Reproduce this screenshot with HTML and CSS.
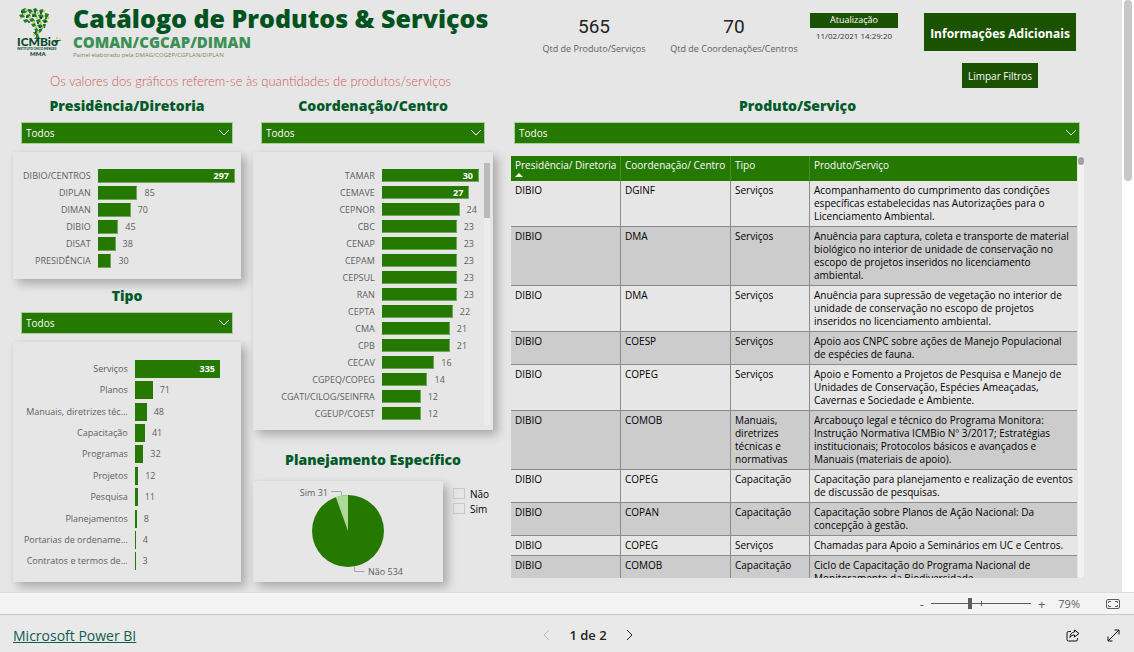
FILE: index.html
```html
<!DOCTYPE html>
<html lang="pt-BR">
<head>
<meta charset="utf-8">
<title>Catálogo de Produtos &amp; Serviços</title>
<link rel="stylesheet" href="styles.css">
</head>
<body>
<div class="viewport">
  <div class="report">
    <header class="header">
      <div class="intro">
        <div class="brand">
          <svg class="logo" viewBox="0 0 46 52" role="img" aria-label="ICMBio MMA">
            <g fill="#1f7a3a">
              <path d="M4 4l4-2 3 2-2 3-4 1zM11 5l3-2 2 3-3 2zM16 3l3-1 2 3-4 1zM22 4l4-1 1 3-4 1zM2 9l4-1 2 3-4 1zM9 9l4-1 1 3-4 1zM15 8l4-1 1 4-4 0zM21 9l4-1 2 3-4 2zM28 7l4 1-1 3-3 0zM6 14l4-1 2 2-4 2zM12 13l4-1 2 3-4 1zM19 14l4-1 1 3-4 1zM25 14l4-1 2 3-4 1zM14 18l4-1 1 3-3 1zM20 19l4-1 2 3-4 1zM26 18l3 0-1 4-3 0zM17 23l3-1 2 3-3 1zM22 23l4-1-2 4-2 1zM16 26l3 0 2 3-3 0zM19 29l2-2 1 4 2 2h-7l2-2z"/>
            </g>
            <g fill="#c3cf2b">
              <circle cx="9" cy="4" r="1.300"/><circle cx="15" cy="7" r="1.200"/><circle cx="21" cy="7" r="1.300"/><circle cx="27" cy="5" r="1.200"/><circle cx="7" cy="8" r="1.200"/><circle cx="4" cy="12" r="1"/><circle cx="13" cy="11" r="1.300"/><circle cx="20" cy="12" r="1.300"/><circle cx="27" cy="10" r="1.200"/><circle cx="31" cy="12" r="1.200"/><circle cx="17" cy="16" r="1.200"/><circle cx="24" cy="17" r="1.400"/><circle cx="19" cy="21" r="1.200"/><circle cx="26" cy="21" r="1"/><circle cx="21" cy="26" r="1.200"/><circle cx="17" cy="29" r="1"/><circle cx="40" cy="32" r="1"/><circle cx="43" cy="33" r=".8"/>
            </g>
            <g fill="#08492a">
              <circle cx="5" cy="6" r="1.100"/><circle cx="12" cy="4" r="1"/><circle cx="18" cy="6" r="1.100"/><circle cx="24" cy="7" r="1.100"/><circle cx="10" cy="11" r="1.100"/><circle cx="16" cy="10" r="1"/><circle cx="24" cy="12" r="1.200"/><circle cx="29" cy="12" r="1"/><circle cx="12" cy="16" r="1"/><circle cx="21" cy="17" r="1.100"/><circle cx="28" cy="16" r="1"/><circle cx="23" cy="21" r="1.100"/><circle cx="19" cy="26" r="1"/><path d="M37 36l3-2 5 0-3 1-3 2z"/>
            </g>
            <text class="logo-name" x="0" y="40">ICMBio</text>
            <text class="logo-sub" x="0" y="44">INSTITUTO CHICO MENDES</text>
            <text class="logo-mma" x="13" y="50">MMA</text>
          </svg>
          <div class="titles">
            <h1>Catálogo de Produtos &amp; Serviços</h1>
            <p class="unit">COMAN/CGCAP/DIMAN</p>
            <p class="author">Painel elaborado pela DMAG/COGEP/CGPLAN/DIPLAN</p>
          </div>
        </div>
        <p class="note">Os valores dos gráficos referem-se às quantidades de produtos/serviços</p>
      </div>
      <div class="kpi"><strong>565</strong><span>Qtd de Produto/Serviços</span></div>
      <div class="kpi kpi-wide"><strong>70</strong><span>Qtd de Coordenações/Centros</span></div>
      <div class="update"><span class="update-title">Atualização</span><time>11/02/2021 14:29:20</time></div>
      <div class="actions">
        <button class="btn btn-info" type="button">Informações Adicionais</button>
        <button class="btn btn-clear" type="button">Limpar Filtros</button>
      </div>
    </header>

    <main class="board">
      <section class="column">
        <h2><label for="f-dir">Presidência/Diretoria</label></h2>
        <div class="picker"><select id="f-dir"><option>Todos</option></select><svg viewBox="0 0 12 8"><path d="M1 1l5 5 5-5"/></svg></div>
        <div class="card chart chart-dir">
          <div class="row"><span class="name">DIBIO/CENTROS</span><div class="track"><div class="bar" style="width:100%"><b>297</b></div></div></div>
          <div class="row"><span class="name">DIPLAN</span><div class="track"><div class="bar" style="width:29%"></div><span>85</span></div></div>
          <div class="row"><span class="name">DIMAN</span><div class="track"><div class="bar" style="width:24%"></div><span>70</span></div></div>
          <div class="row"><span class="name">DIBIO</span><div class="track"><div class="bar" style="width:15%"></div><span>45</span></div></div>
          <div class="row"><span class="name">DISAT</span><div class="track"><div class="bar" style="width:13%"></div><span>38</span></div></div>
          <div class="row"><span class="name">PRESIDÊNCIA</span><div class="track"><div class="bar" style="width:10%"></div><span>30</span></div></div>
        </div>
        <h2 class="second"><label for="f-tipo">Tipo</label></h2>
        <div class="picker"><select id="f-tipo"><option>Todos</option></select><svg viewBox="0 0 12 8"><path d="M1 1l5 5 5-5"/></svg></div>
        <div class="card chart chart-tipo">
          <div class="row"><span class="name">Serviços</span><div class="track"><div class="bar" style="width:100%"><b>335</b></div></div></div>
          <div class="row"><span class="name">Planos</span><div class="track"><div class="bar" style="width:21%"></div><span>71</span></div></div>
          <div class="row"><span class="name">Manuais, diretrizes téc...</span><div class="track"><div class="bar" style="width:14%"></div><span>48</span></div></div>
          <div class="row"><span class="name">Capacitação</span><div class="track"><div class="bar" style="width:12%"></div><span>41</span></div></div>
          <div class="row"><span class="name">Programas</span><div class="track"><div class="bar" style="width:10%"></div><span>32</span></div></div>
          <div class="row"><span class="name">Projetos</span><div class="track"><div class="bar" style="width:4%"></div><span>12</span></div></div>
          <div class="row"><span class="name">Pesquisa</span><div class="track"><div class="bar" style="width:3.5%"></div><span>11</span></div></div>
          <div class="row"><span class="name">Planejamentos</span><div class="track"><div class="bar" style="width:2.4%"></div><span>8</span></div></div>
          <div class="row"><span class="name">Portarias de ordename...</span><div class="track"><div class="bar" style="width:1.2%"></div><span>4</span></div></div>
          <div class="row"><span class="name">Contratos e termos de...</span><div class="track"><div class="bar" style="width:1%"></div><span>3</span></div></div>
        </div>
      </section>

      <section class="column">
        <h2><label for="f-coord">Coordenação/Centro</label></h2>
        <div class="picker"><select id="f-coord"><option>Todos</option></select><svg viewBox="0 0 12 8"><path d="M1 1l5 5 5-5"/></svg></div>
        <div class="card chart chart-coord">
          <div class="rows">
            <div class="row"><span class="name">TAMAR</span><div class="track"><div class="bar" style="width:100%"><b>30</b></div></div></div>
            <div class="row"><span class="name">CEMAVE</span><div class="track"><div class="bar" style="width:90%"><b>27</b></div></div></div>
            <div class="row"><span class="name">CEPNOR</span><div class="track"><div class="bar" style="width:80%"></div><span>24</span></div></div>
            <div class="row"><span class="name">CBC</span><div class="track"><div class="bar" style="width:77%"></div><span>23</span></div></div>
            <div class="row"><span class="name">CENAP</span><div class="track"><div class="bar" style="width:77%"></div><span>23</span></div></div>
            <div class="row"><span class="name">CEPAM</span><div class="track"><div class="bar" style="width:77%"></div><span>23</span></div></div>
            <div class="row"><span class="name">CEPSUL</span><div class="track"><div class="bar" style="width:77%"></div><span>23</span></div></div>
            <div class="row"><span class="name">RAN</span><div class="track"><div class="bar" style="width:77%"></div><span>23</span></div></div>
            <div class="row"><span class="name">CEPTA</span><div class="track"><div class="bar" style="width:73%"></div><span>22</span></div></div>
            <div class="row"><span class="name">CMA</span><div class="track"><div class="bar" style="width:70%"></div><span>21</span></div></div>
            <div class="row"><span class="name">CPB</span><div class="track"><div class="bar" style="width:70%"></div><span>21</span></div></div>
            <div class="row"><span class="name">CECAV</span><div class="track"><div class="bar" style="width:54%"></div><span>16</span></div></div>
            <div class="row"><span class="name">CGPEQ/COPEG</span><div class="track"><div class="bar" style="width:47%"></div><span>14</span></div></div>
            <div class="row"><span class="name">CGATI/CILOG/SEINFRA</span><div class="track"><div class="bar" style="width:40%"></div><span>12</span></div></div>
            <div class="row"><span class="name">CGEUP/COEST</span><div class="track"><div class="bar" style="width:40%"></div><span>12</span></div></div>
          </div>
          <div class="rail"><div class="rail-thumb"></div></div>
        </div>
        <h2 class="plan">Planejamento Específico</h2>
        <div class="plan-row">
          <div class="card pie">
            <svg viewBox="0 0 190 101" role="img" aria-label="Sim 31, Não 534">
              <circle cx="95" cy="50" r="36" fill="#257800"/>
              <path d="M95 50V14A36 36 0 0 0 82.800 16.100Z" fill="#add89a"/>
              <path d="M78 10.500h10.500v4M101.500 86v4.500h10" fill="none" stroke="#a6a6a6"/>
              <text x="75" y="15" text-anchor="end">Sim 31</text>
              <text x="115" y="94">Não 534</text>
            </svg>
          </div>
          <div class="checks">
            <label><input type="checkbox">Não</label>
            <label><input type="checkbox">Sim</label>
          </div>
        </div>
      </section>

      <section class="column column-wide">
        <h2><label for="f-prod">Produto/Serviço</label></h2>
        <div class="picker"><select id="f-prod"><option>Todos</option></select><svg viewBox="0 0 12 8"><path d="M1 1l5 5 5-5"/></svg></div>
        <div class="table-box">
          <div class="table-clip">
            <table>
              <colgroup><col class="c1"><col class="c2"><col class="c3"><col></colgroup>
              <thead><tr><th aria-sort="ascending">Presidência/ Diretoria<svg class="sort" viewBox="0 0 8 4"><path d="M0 4l4-4 4 4z"/></svg></th><th>Coordenação/ Centro</th><th>Tipo</th><th>Produto/Serviço</th></tr></thead>
              <tbody>
                <tr><td>DIBIO</td><td>DGINF</td><td>Serviços</td><td>Acompanhamento do cumprimento das condições<br>específicas estabelecidas nas Autorizações para o<br>Licenciamento Ambiental.</td></tr>
                <tr><td>DIBIO</td><td>DMA</td><td>Serviços</td><td>Anuência para captura, coleta e transporte de material<br>biológico no interior de unidade de conservação no<br>escopo de projetos inseridos no licenciamento<br>ambiental.</td></tr>
                <tr><td>DIBIO</td><td>DMA</td><td>Serviços</td><td>Anuência para supressão de vegetação no interior de<br>unidade de conservação no escopo de projetos<br>inseridos no licenciamento ambiental.</td></tr>
                <tr><td>DIBIO</td><td>COESP</td><td>Serviços</td><td>Apoio aos CNPC sobre ações de Manejo Populacional<br>de espécies de fauna.</td></tr>
                <tr><td>DIBIO</td><td>COPEG</td><td>Serviços</td><td>Apoio e Fomento a Projetos de Pesquisa e Manejo de<br>Unidades de Conservação, Espécies Ameaçadas,<br>Cavernas e Sociedade e Ambiente.</td></tr>
                <tr><td>DIBIO</td><td>COMOB</td><td>Manuais,<br>diretrizes<br>técnicas e<br>normativas</td><td>Arcabouço legal e técnico do Programa Monitora:<br>Instrução Normativa ICMBio Nº 3/2017; Estratégias<br>institucionais; Protocolos básicos e avançados e<br>Manuais (materiais de apoio).</td></tr>
                <tr><td>DIBIO</td><td>COPEG</td><td>Capacitação</td><td>Capacitação para planejamento e realização de eventos<br>de discussão de pesquisas.</td></tr>
                <tr><td>DIBIO</td><td>COPAN</td><td>Capacitação</td><td>Capacitação sobre Planos de Ação Nacional: Da<br>concepção à gestão.</td></tr>
                <tr><td>DIBIO</td><td>COPEG</td><td>Serviços</td><td>Chamadas para Apoio a Seminários em UC e Centros.</td></tr>
                <tr><td>DIBIO</td><td>COMOB</td><td>Capacitação</td><td>Ciclo de Capacitação do Programa Nacional de<br>Monitoramento da Biodiversidade.</td></tr>
              </tbody>
            </table>
          </div>
          <div class="table-rail"><div class="table-thumb"></div></div>
        </div>
      </section>
    </main>
  </div>
  <div class="page-rail"><div class="page-thumb"></div></div>
</div>

<div class="zoombar">
  <button class="plain" type="button" aria-label="Reduzir">-</button>
  <input class="zoom" type="range" min="0" max="100" value="39" aria-label="Zoom">
  <button class="plain" type="button" aria-label="Ampliar">+</button>
  <span class="percent">79%</span>
  <button class="plain" type="button" aria-label="Ajustar à página"><svg width="14" height="10" viewBox="0 0 14 10"><rect x=".5" y=".5" width="13" height="9" rx="1.500"/><path d="M2.500 4V2.500H5M9 2.500h2.500V4M11.500 6v1.500H9M5 7.500H2.500V6"/></svg></button>
</div>

<footer class="footer">
  <div class="foot-left"><a href="#">Microsoft Power BI</a></div>
  <nav class="pager">
    <button class="plain" type="button" aria-label="Anterior" disabled><svg width="7" height="12" viewBox="0 0 7 12"><path d="M6 1L1 6l5 5"/></svg></button>
    <span>1 de 2</span>
    <button class="plain" type="button" aria-label="Próxima"><svg width="7" height="12" viewBox="0 0 7 12"><path d="M1 1l5 5-5 5"/></svg></button>
  </nav>
  <div class="foot-right">
    <button class="plain" type="button" aria-label="Compartilhar"><svg width="14" height="13" viewBox="0 0 14 13"><path d="M5 2.500H2.500a1.500 1.500 0 0 0-1.500 1.500v6.500A1.500 1.500 0 0 0 2.500 12h7.500a1.500 1.500 0 0 0 1.500-1.500V9M8.500 1l4.500 3.500L8.500 8V6C6.500 6 5 6.500 4 8.500 4 5.500 5.500 3.200 8.500 3z"/></svg></button>
    <button class="plain" type="button" aria-label="Tela cheia"><svg width="13" height="13" viewBox="0 0 13 13"><path d="M1 12L12 1M7.500 1H12v4.500M1 7.500V12h4.500"/></svg></button>
  </div>
</footer>
</body>
</html>
```
FILE: styles.css
```css
* { box-sizing: border-box; }

body {
  margin: 0;
  height: 100vh;
  display: flex;
  flex-direction: column;
  overflow: hidden;
  background: #e6e6e6;
  color: #000;
  font-family: "Open Sans", "Noto Sans", sans-serif;
  font-size: 11px;
}

h1, h2, p { margin: 0; }
button { font-family: inherit; border: 0; padding: 0; cursor: pointer; }

.viewport { flex: 1; min-height: 0; display: flex; }
.report { flex: 1; min-width: 0; display: flex; flex-direction: column; }
.page-rail { width: 12px; background: #fff; padding: 0 2px; }
.page-thumb { height: 181px; background: #c8c8c8; border-radius: 4px; }

/* Header */
.header { display: flex; height: 97px; padding-right: 46px; }
.intro { flex: 1; min-width: 0; }
.brand { display: flex; height: 72px; padding: 6px 0 0 17px; gap: 10px; }
.logo { width: 46px; height: 52px; }
.logo text { fill: #08492a; font-family: Lato, sans-serif; font-weight: 900; }
.logo-name { font-size: 12px; }
.logo-sub { font-size: 3px; }
.logo-mma { font-size: 6px; }
.titles { white-space: nowrap; color: #00521f; }
h1 { font: 800 25px/24px "Open Sans", sans-serif; }
.unit { font: 800 15px/20px "Open Sans", sans-serif; margin-top: 2px; color: #3d8f55; }
.author { font-size: 6px; line-height: 7px; color: #7a8a60; }
.note { padding-left: 50px; font: 300 13px/18px Lato, sans-serif; color: #d4575c; white-space: nowrap; }

.kpi { width: 128px; padding-top: 15px; display: flex; flex-direction: column; align-items: center; white-space: nowrap; }
.kpi-wide { width: 152px; }
.kpi strong { font: 400 19px/24px Roboto, sans-serif; color: #222; }
.kpi span { font-size: 9px; line-height: 14px; margin-top: 3px; color: #605e5c; }

.update { width: 88px; margin-right: 26px; padding-top: 13px; text-align: center; white-space: nowrap; }
.update-title { display: block; height: 15px; line-height: 13px; font-size: 9px; background: #1b5200; color: #fff; }
.update time { display: block; font-size: 8px; line-height: 16px; color: #333; }

.actions { width: 152px; padding-top: 13px; display: flex; flex-direction: column; align-items: center; gap: 12px; }
.btn { background: #1b5200; color: #fff; white-space: nowrap; }
.btn-info { width: 100%; height: 38px; padding-top: 2px; font-size: 12px; font-weight: 700; }
.btn-clear { width: 76px; height: 25px; font-size: 10px; }

/* Board */
.board {
  flex: 1;
  min-height: 0;
  display: grid;
  grid-template-columns: 228fr 240fr 579fr;
  gap: 12px;
  padding: 0 38px 10px 13px;
}
.column { display: flex; flex-direction: column; min-width: 0; min-height: 0; }
.column-wide { padding-left: 6px; }
h2 {
  height: 18px;
  margin-bottom: 7px;
  text-align: center;
  font: 800 14px/18px "Open Sans", sans-serif;
  color: #005a28;
}
.second { margin-top: 8px; }
.plan { margin-top: 21px; margin-bottom: 12px; }

.picker { position: relative; margin: 0 8px 8px; height: 22px; }
.column-wide .picker { margin: 0 4px 12px 3px; }
.picker select {
  appearance: none;
  width: 100%;
  height: 22px;
  padding: 0 4px;
  border: 1px solid #a9cf99;
  border-radius: 0;
  background: #257800;
  color: #fff;
  font: 10px "Open Sans", sans-serif;
}
.picker svg { position: absolute; right: 3px; top: 7px; width: 12px; height: 8px; fill: none; stroke: #fff; pointer-events: none; }

.card { background: #e6e6e6; box-shadow: 5px 5px 9px rgba(0, 0, 0, .25), 0 0 3px rgba(0, 0, 0, .05); }
.chart { font-size: 9px; color: #605e5c; }
.chart-dir { height: 127px; padding: 15px 6px 10px 4px; }
.chart-tipo { flex: 1; display: flex; flex-direction: column; padding: 16px 21px 10px 4px; }
.chart-coord { height: 278px; display: flex; padding: 15px 3px 5px 10px; }
.rows { flex: 1; }
.row { display: flex; align-items: center; height: 17px; }
.chart-tipo .row { flex: 1; height: auto; }
.name { flex: 1; text-align: right; white-space: nowrap; padding-right: 7px; line-height: 14px; }
.track { width: 63%; display: flex; align-items: center; gap: 7px; line-height: 14px; }
.chart-tipo .track { width: 42%; }
.chart-coord .track { width: 45%; }
.bar { flex: none; height: 14px; background: #257800; border: 1px solid #6fa658; border-left-color: #257800; border-top-color: #257800; text-align: right; }
.chart-coord .bar { height: 13px; }
.chart-tipo .bar { height: 18px; border-width: 0; }
.bar b { display: block; padding-right: 5px; line-height: 12px; font-weight: 700; color: #fff; }
.chart-tipo .bar b { line-height: 18px; }
.rail { width: 6px; margin-left: 5px; margin-top: -4px; background: #ececec; }
.rail-thumb { height: 55px; background: #bababa; }

.plan-row { display: flex; flex: 1; gap: 10px; }
.pie { width: 190px; }
.pie svg { display: block; width: 100%; }
.pie text { font-size: 9px; fill: #605e5c; }
.checks { padding-top: 5px; font-size: 10px; }
.checks label { display: flex; align-items: center; gap: 5px; height: 15px; }
.checks input { appearance: none; width: 12px; height: 11px; margin: 0; border: 1px solid #c8c8c8; }

/* Table */
.table-box { flex: 1; min-height: 0; display: flex; gap: 1px; margin-bottom: 4px; }
.table-clip { flex: 1; overflow: hidden; }
table { width: 100%; border-collapse: separate; border-spacing: 0; table-layout: fixed; font-size: 10px; line-height: 13px; }
.c1 { width: 109px; }
.c2 { width: 110px; }
.c3 { width: 79px; }
th { height: 25px; padding: 3px 0 2px 4px; background: #257800; color: #fff; font-weight: 400; text-align: left; vertical-align: top; white-space: nowrap; }
th + th { border-left: 1px solid #4b8d30; }
.sort { display: block; width: 8px; height: 4px; margin-top: 1px; fill: #fff; }
td { padding: 3px 0 3px 4px; border-bottom: 1px solid #8c8c8c; vertical-align: top; white-space: nowrap; }
td + td { border-left: 1px solid #8c8c8c; }
tbody tr:nth-child(even) { background: #ccc; }
.table-rail { width: 6px; background: #f3f3f3; border-radius: 3px; }
.table-thumb { height: 8px; margin-top: 1px; background: #a3a3a3; border-radius: 3px; }

/* Bottom bars */
.zoombar { height: 22px; display: flex; align-items: center; justify-content: flex-end; gap: 7px; padding-right: 14px; background: #f4f4f4; border-top: 1px solid #ddd; color: #605e5c; }
.plain { background: none; color: inherit; font-size: 13px; line-height: 14px; }
.plain svg { display: block; fill: none; stroke: currentColor; }
.zoom {
  appearance: none;
  width: 100px;
  height: 11px;
  margin: 0;
  background:
    linear-gradient(#605e5c, #605e5c) 50px 50% / 1px 5px no-repeat,
    linear-gradient(#605e5c, #605e5c) 0 50% / 100% 1px no-repeat;
}
.zoom::-webkit-slider-thumb { appearance: none; width: 4px; height: 11px; background: #605e5c; }
.percent { font-size: 11px; margin: 0 19px 0 6px; }

.footer { height: 38px; display: grid; grid-template-columns: 1fr auto 1fr; align-items: center; padding: 3px 14px 0 13px; background: #e9e9e9; border-top: 1px solid #c6c6c6; }
.footer a { font-size: 14px; color: #0f5c50; }
.pager { display: flex; align-items: center; gap: 19px; margin-left: 43px; font-size: 13px; font-weight: 600; color: #222; }
.pager button:disabled { color: #bbb; }
.foot-right { display: flex; justify-content: flex-end; gap: 27px; color: #111; }
```
